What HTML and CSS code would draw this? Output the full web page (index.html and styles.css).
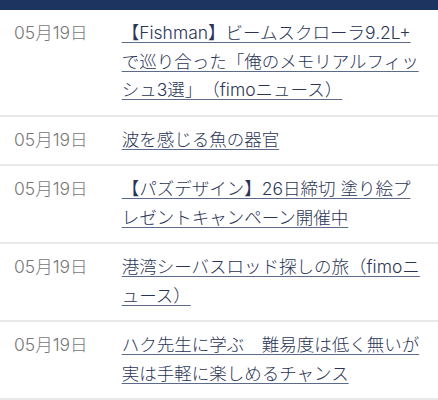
FILE: index.html
```html
<!DOCTYPE html>
<html lang="ja">

<head>
    <meta charset="UTF-8">
    <title>ニュース一覧</title>
    <link rel="stylesheet" href="styles.css">
</head>

<body>
    <div class="top-bar"></div>
    <ul class="news-list">
        <li class="news-item">
            <span class="news-date">05月19日</span>
            <a class="news-title" href="#">【Fishman】ビームスクローラ9.2L+<wbr>で巡り合った「俺のメモリアルフィッシュ3選」（fimoニュース）</a>
        </li>
        <li class="news-item">
            <span class="news-date">05月19日</span>
            <a class="news-title" href="#">波を感じる魚の器官</a>
        </li>
        <li class="news-item">
            <span class="news-date">05月19日</span>
            <a class="news-title" href="#">【パズデザイン】26日締切 塗り絵プレゼントキャンペーン開催中</a>
        </li>
        <li class="news-item">
            <span class="news-date">05月19日</span>
            <a class="news-title" href="#">港湾シーバスロッド探しの旅（fimoニュース）</a>
        </li>
        <li class="news-item">
            <span class="news-date">05月19日</span>
            <a class="news-title" href="#">ハク先生に学ぶ　難易度は低く無いが実は手軽に楽しめるチャンス</a>
        </li>
    </ul>
</body>

</html>
```

FILE: styles.css
```css
body {
    font-family: Inter, "Noto Sans CJK JP", sans-serif;
    margin: 0;
    padding: 0;
    background-color: #fff;
}

.top-bar {
    height: 10px;
    background-color: #1d3461;
}

.news-list {
    list-style: none;
    margin: 0;
    padding: 0;
}

.news-item {
    display: flex;
    padding: 9px 0 10px 14px;
    border-bottom: 2px solid #e8e8e8;
    line-height: 28.5px;
}

.news-date {
    flex: 0 0 107.7px;
    font-size: 17.5px;
    font-weight: 300;
    color: #777;
}

.news-title {
    flex: 0 0 299.2px;
    font-size: 17.5px;
    font-weight: 300;
    color: #2a3556;
    text-decoration: underline;
    text-decoration-color: #5d6b8a;
    text-underline-offset: 3px;
    text-spacing-trim: space-all;
}
```
